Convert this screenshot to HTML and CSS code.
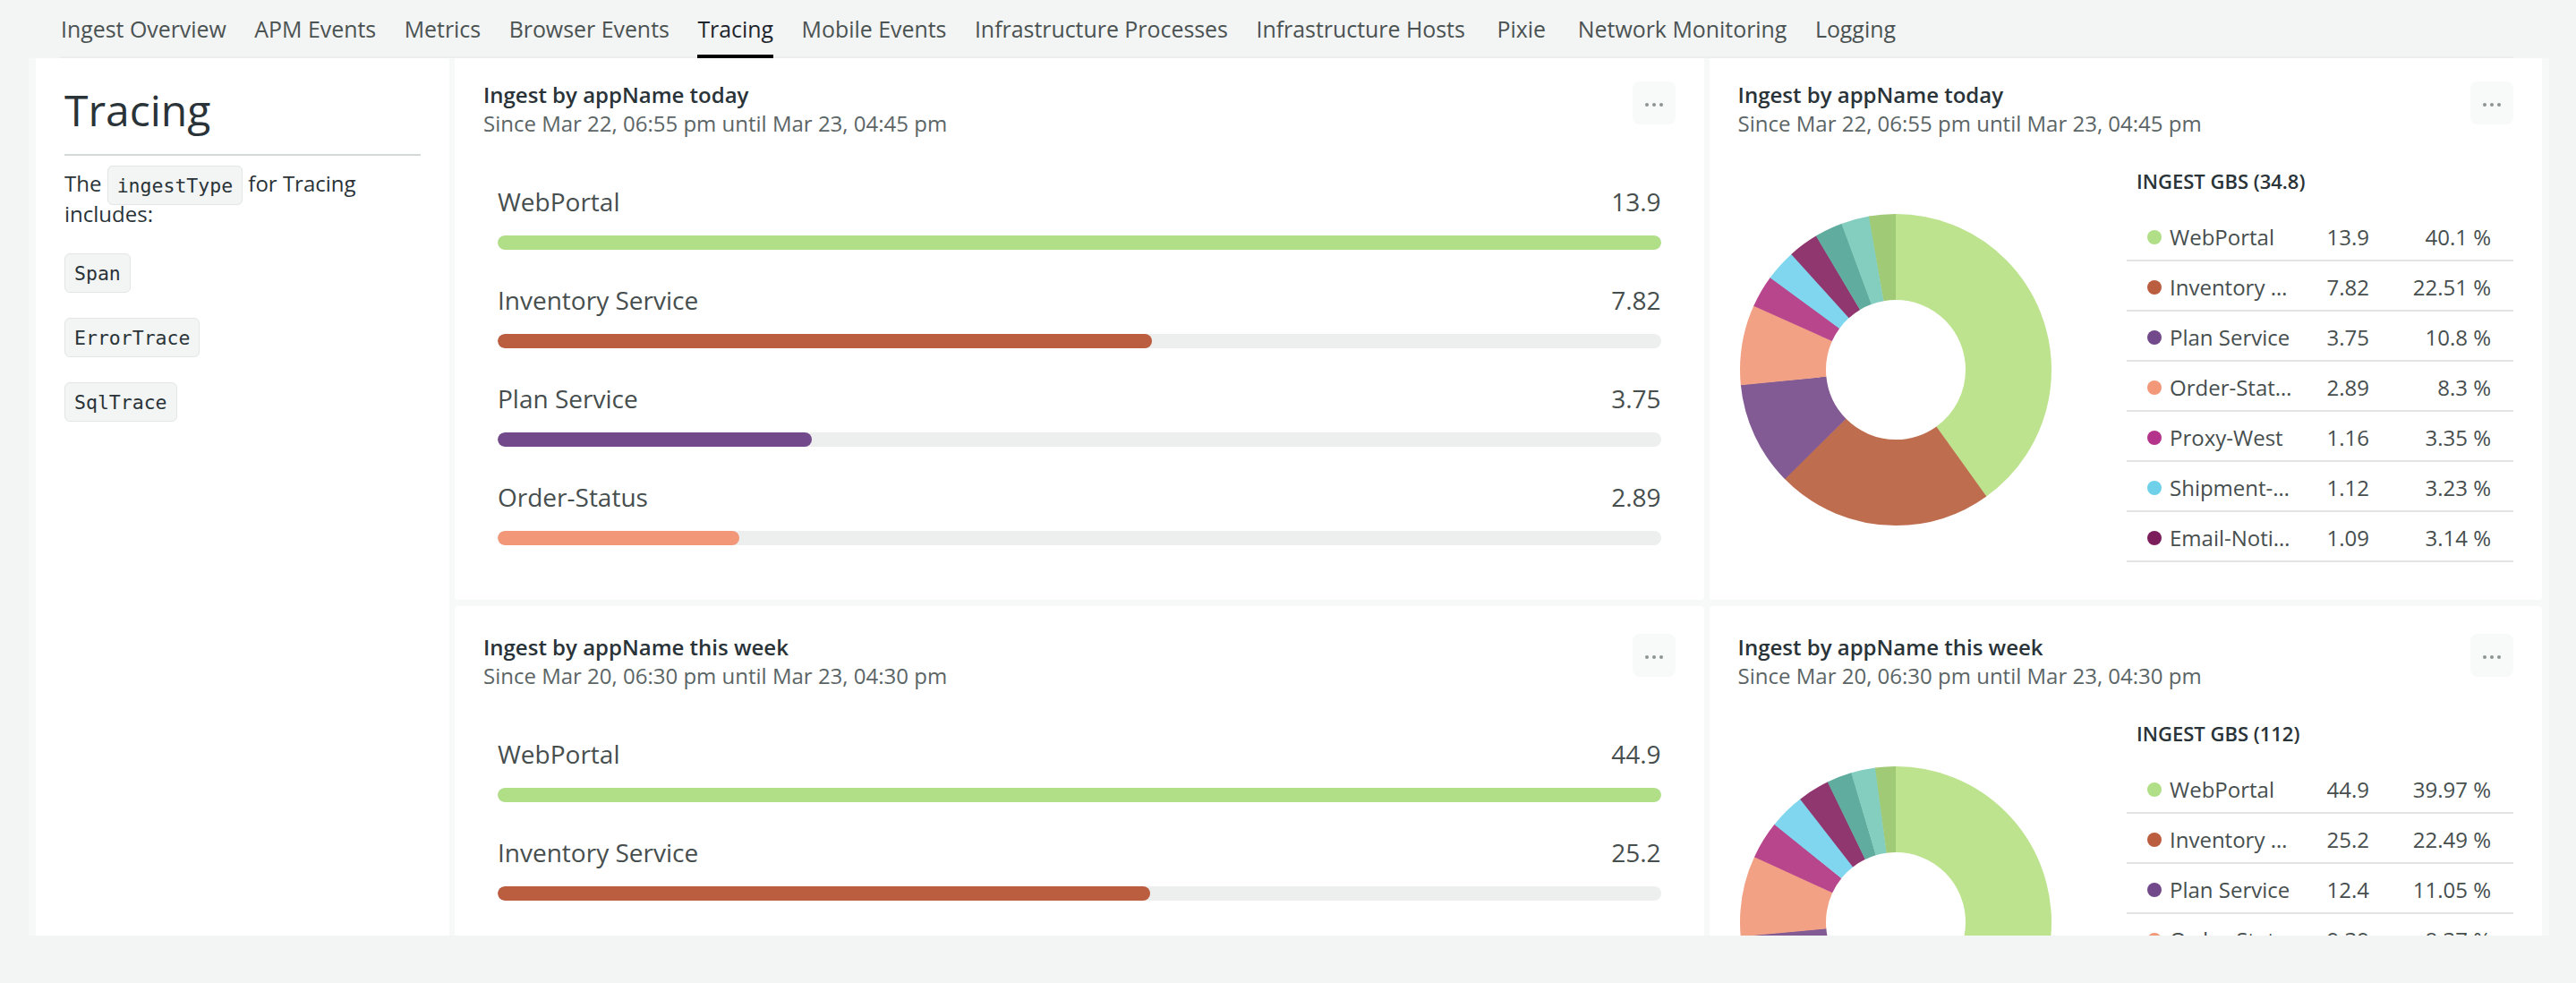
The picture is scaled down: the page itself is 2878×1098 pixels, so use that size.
FILE: index.html
```html
<!DOCTYPE html>
<html lang="en">
<head>
<meta charset="utf-8">
<title>Tracing</title>
<link rel="stylesheet" href="styles.css">
</head>
<body>
<nav class="tabs">
  <ul class="tab-list">
    <li class="tab">Ingest Overview</li>
    <li class="tab">APM Events</li>
    <li class="tab">Metrics</li>
    <li class="tab">Browser Events</li>
    <li class="tab is-active">Tracing</li>
    <li class="tab">Mobile Events</li>
    <li class="tab">Infrastructure Processes</li>
    <li class="tab">Infrastructure Hosts</li>
    <li class="tab">Pixie</li>
    <li class="tab">Network Monitoring</li>
    <li class="tab">Logging</li>
  </ul>
</nav>
<main class="dash">
  <div class="grid">
    <aside class="intro">
      <h1 class="intro-title">Tracing</h1>
      <p class="intro-text">The <code class="chip">ingestType</code> for Tracing includes:</p>
      <ul class="chip-list">
        <li><code class="chip">Span</code></li>
        <li><code class="chip">ErrorTrace</code></li>
        <li><code class="chip">SqlTrace</code></li>
      </ul>
    </aside>

    <section class="card">
      <header class="card-head">
        <div>
          <h2 class="card-title">Ingest by appName today</h2>
          <p class="card-sub">Since Mar 22, 06:55 pm until Mar 23, 04:45 pm</p>
        </div>
        <div class="more"><i></i><i></i><i></i></div>
      </header>
      <ul class="bars">
        <li class="bar-row"><div class="bar-head"><span>WebPortal</span><span>13.9</span></div><div class="bar-track"><div class="bar-fill c-web" style="width:100%"></div></div></li>
        <li class="bar-row"><div class="bar-head"><span>Inventory Service</span><span>7.82</span></div><div class="bar-track"><div class="bar-fill c-inv" style="width:56.26%"></div></div></li>
        <li class="bar-row"><div class="bar-head"><span>Plan Service</span><span>3.75</span></div><div class="bar-track"><div class="bar-fill c-plan" style="width:26.98%"></div></div></li>
        <li class="bar-row"><div class="bar-head"><span>Order-Status</span><span>2.89</span></div><div class="bar-track"><div class="bar-fill c-order" style="width:20.79%"></div></div></li>
      </ul>
    </section>

    <section class="card">
      <header class="card-head">
        <div>
          <h2 class="card-title">Ingest by appName today</h2>
          <p class="card-sub">Since Mar 22, 06:55 pm until Mar 23, 04:45 pm</p>
        </div>
        <div class="more"><i></i><i></i><i></i></div>
      </header>
      <div class="pie-body">
        <svg class="donut" viewBox="0 0 348 348">
          <g transform="rotate(-90 174 174)" fill="none" stroke-width="96">
            <circle cx="174" cy="174" r="126" pathLength="100" stroke="#bde38f" stroke-dasharray="40.15 100" stroke-dashoffset="0"/>
            <circle cx="174" cy="174" r="126" pathLength="100" stroke="#bf6d4f" stroke-dasharray="22.56 100" stroke-dashoffset="-40.1"/>
            <circle cx="174" cy="174" r="126" pathLength="100" stroke="#825b94" stroke-dasharray="10.85 100" stroke-dashoffset="-62.61"/>
            <circle cx="174" cy="174" r="126" pathLength="100" stroke="#f2a184" stroke-dasharray="8.35 100" stroke-dashoffset="-73.41"/>
            <circle cx="174" cy="174" r="126" pathLength="100" stroke="#b8468c" stroke-dasharray="3.4 100" stroke-dashoffset="-81.71"/>
            <circle cx="174" cy="174" r="126" pathLength="100" stroke="#7fd6ee" stroke-dasharray="3.28 100" stroke-dashoffset="-85.06"/>
            <circle cx="174" cy="174" r="126" pathLength="100" stroke="#913770" stroke-dasharray="3.19 100" stroke-dashoffset="-88.29"/>
            <circle cx="174" cy="174" r="126" pathLength="100" stroke="#60ac9e" stroke-dasharray="2.95 100" stroke-dashoffset="-91.43"/>
            <circle cx="174" cy="174" r="126" pathLength="100" stroke="#84cec0" stroke-dasharray="2.95 100" stroke-dashoffset="-94.33"/>
            <circle cx="174" cy="174" r="126" pathLength="100" stroke="#a0ca75" stroke-dasharray="2.77 100" stroke-dashoffset="-97.23"/>
          </g>
        </svg>
        <div class="legend">
          <h3 class="legend-title">Ingest GBs (34.8)</h3>
          <ul class="legend-list">
            <li class="legend-row"><span class="dot c-web"></span><span class="lg-name">WebPortal</span><span class="lg-val">13.9</span><span class="lg-pct">40.1 %</span></li>
            <li class="legend-row"><span class="dot c-inv"></span><span class="lg-name">Inventory Service</span><span class="lg-val">7.82</span><span class="lg-pct">22.51 %</span></li>
            <li class="legend-row"><span class="dot c-plan"></span><span class="lg-name">Plan Service</span><span class="lg-val">3.75</span><span class="lg-pct">10.8 %</span></li>
            <li class="legend-row"><span class="dot c-order"></span><span class="lg-name">Order-Status</span><span class="lg-val">2.89</span><span class="lg-pct">8.3 %</span></li>
            <li class="legend-row"><span class="dot c-proxy"></span><span class="lg-name">Proxy-West</span><span class="lg-val">1.16</span><span class="lg-pct">3.35 %</span></li>
            <li class="legend-row"><span class="dot c-ship"></span><span class="lg-name">Shipment-Tracking</span><span class="lg-val">1.12</span><span class="lg-pct">3.23 %</span></li>
            <li class="legend-row"><span class="dot c-email"></span><span class="lg-name">Email-Notifications</span><span class="lg-val">1.09</span><span class="lg-pct">3.14 %</span></li>
          </ul>
        </div>
      </div>
    </section>

    <section class="card">
      <header class="card-head">
        <div>
          <h2 class="card-title">Ingest by appName this week</h2>
          <p class="card-sub">Since Mar 20, 06:30 pm until Mar 23, 04:30 pm</p>
        </div>
        <div class="more"><i></i><i></i><i></i></div>
      </header>
      <ul class="bars">
        <li class="bar-row"><div class="bar-head"><span>WebPortal</span><span>44.9</span></div><div class="bar-track"><div class="bar-fill c-web" style="width:100%"></div></div></li>
        <li class="bar-row"><div class="bar-head"><span>Inventory Service</span><span>25.2</span></div><div class="bar-track"><div class="bar-fill c-inv" style="width:56.12%"></div></div></li>
        <li class="bar-row"><div class="bar-head"><span>Plan Service</span><span>12.4</span></div><div class="bar-track"><div class="bar-fill c-plan" style="width:27.62%"></div></div></li>
        <li class="bar-row"><div class="bar-head"><span>Order-Status</span><span>9.39</span></div><div class="bar-track"><div class="bar-fill c-order" style="width:20.91%"></div></div></li>
      </ul>
    </section>

    <section class="card">
      <header class="card-head">
        <div>
          <h2 class="card-title">Ingest by appName this week</h2>
          <p class="card-sub">Since Mar 20, 06:30 pm until Mar 23, 04:30 pm</p>
        </div>
        <div class="more"><i></i><i></i><i></i></div>
      </header>
      <div class="pie-body">
        <svg class="donut" viewBox="0 0 348 348">
          <g transform="rotate(-90 174 174)" fill="none" stroke-width="96">
            <circle cx="174" cy="174" r="126" pathLength="100" stroke="#bde38f" stroke-dasharray="40.02 100" stroke-dashoffset="0"/>
            <circle cx="174" cy="174" r="126" pathLength="100" stroke="#bf6d4f" stroke-dasharray="22.54 100" stroke-dashoffset="-39.97"/>
            <circle cx="174" cy="174" r="126" pathLength="100" stroke="#825b94" stroke-dasharray="11.1 100" stroke-dashoffset="-62.46"/>
            <circle cx="174" cy="174" r="126" pathLength="100" stroke="#f2a184" stroke-dasharray="8.42 100" stroke-dashoffset="-73.51"/>
            <circle cx="174" cy="174" r="126" pathLength="100" stroke="#b8468c" stroke-dasharray="3.95 100" stroke-dashoffset="-81.88"/>
            <circle cx="174" cy="174" r="126" pathLength="100" stroke="#7fd6ee" stroke-dasharray="3.75 100" stroke-dashoffset="-85.78"/>
            <circle cx="174" cy="174" r="126" pathLength="100" stroke="#913770" stroke-dasharray="3.35 100" stroke-dashoffset="-89.48"/>
            <circle cx="174" cy="174" r="126" pathLength="100" stroke="#60ac9e" stroke-dasharray="2.65 100" stroke-dashoffset="-92.78"/>
            <circle cx="174" cy="174" r="126" pathLength="100" stroke="#84cec0" stroke-dasharray="2.55 100" stroke-dashoffset="-95.38"/>
            <circle cx="174" cy="174" r="126" pathLength="100" stroke="#a0ca75" stroke-dasharray="2.12 100" stroke-dashoffset="-97.88"/>
          </g>
        </svg>
        <div class="legend">
          <h3 class="legend-title">Ingest GBs (112)</h3>
          <ul class="legend-list">
            <li class="legend-row"><span class="dot c-web"></span><span class="lg-name">WebPortal</span><span class="lg-val">44.9</span><span class="lg-pct">39.97 %</span></li>
            <li class="legend-row"><span class="dot c-inv"></span><span class="lg-name">Inventory Service</span><span class="lg-val">25.2</span><span class="lg-pct">22.49 %</span></li>
            <li class="legend-row"><span class="dot c-plan"></span><span class="lg-name">Plan Service</span><span class="lg-val">12.4</span><span class="lg-pct">11.05 %</span></li>
            <li class="legend-row"><span class="dot c-order"></span><span class="lg-name">Order-Status</span><span class="lg-val">9.39</span><span class="lg-pct">8.37 %</span></li>
            <li class="legend-row"><span class="dot c-proxy"></span><span class="lg-name">Proxy-West</span><span class="lg-val">4.38</span><span class="lg-pct">3.9 %</span></li>
            <li class="legend-row"><span class="dot c-ship"></span><span class="lg-name">Shipment-Tracking</span><span class="lg-val">4.16</span><span class="lg-pct">3.7 %</span></li>
            <li class="legend-row"><span class="dot c-email"></span><span class="lg-name">Email-Notifications</span><span class="lg-val">3.7</span><span class="lg-pct">3.3 %</span></li>
          </ul>
        </div>
      </div>
    </section>
  </div>
</main>
</body>
</html>
```

FILE: styles.css
```css
html, body {
  margin: 0;
  padding: 0;
}

body {
  width: 2878px;
  height: 1098px;
  overflow: hidden;
  background: #f3f4f4;
  font-family: "Open Sans", "Liberation Sans", sans-serif;
  color: #464e4e;
}

ul {
  list-style: none;
  margin: 0;
  padding: 0;
}

/* ---------- Tabs ---------- */
.tabs {
  height: 65px;
  padding: 0 70px 0 67px;
}

.tab-list {
  display: flex;
  gap: 31.5px;
  height: 65px;
  padding-left: 1px;
  box-shadow: inset 0 -2px 0 #eceeee;
}

.tab {
  box-sizing: border-box;
  min-width: 63px;
  height: 65px;
  padding-top: 16px;
  font-size: 24.9px;
  line-height: 32px;
  text-align: center;
  color: #4a5252;
  border-bottom: 4px solid transparent;
  white-space: nowrap;
}

.tab.is-active {
  color: #1d252c;
  border-bottom-color: #000;
}

/* ---------- Dashboard ---------- */
.dash {
  box-sizing: border-box;
  width: 2816px;
  height: 980px;
  margin-left: 32px;
  padding: 0 8px;
  background: #f7f8f8;
  overflow: hidden;
}

.grid {
  display: grid;
  grid-template-columns: 462px 3fr 2fr;
  grid-template-rows: 610px 610px;
  gap: 7px 6px;
  margin-top: -5px;
}

/* ---------- Intro panel ---------- */
.intro {
  grid-row: 1 / 3;
  background: #fff;
  padding: 32px;
}

.intro-title {
  margin: 0;
  padding-bottom: 18px;
  border-bottom: 2px solid #d5d8d8;
  font-size: 48px;
  font-weight: 400;
  line-height: 62px;
  color: #293338;
}

.intro-text {
  margin: 14px 0 0;
  font-size: 24px;
  line-height: 34px;
  color: #293338;
}

.chip {
  font-family: "DejaVu Sans Mono", "Liberation Mono", monospace;
  font-size: 21.5px;
  color: #293338;
  background: #f3f4f4;
  border: 1px solid #e3e6e6;
  border-radius: 6px;
  padding: 8.5px 10px;
}

.intro-text .chip {
  line-height: 18px;
}

.chip-list {
  margin-top: 27px;
  display: flex;
  flex-direction: column;
  align-items: flex-start;
  gap: 28px;
}

.chip-list .chip {
  display: block;
  line-height: 25px;
}

/* ---------- Cards ---------- */
.card {
  background: #fff;
  padding: 32px;
  border-radius: 4px;
  min-width: 0;
  overflow: hidden;
}

.card-head {
  display: flex;
  justify-content: space-between;
  align-items: flex-start;
}

.card-title {
  margin: 0;
  font-size: 24px;
  font-weight: 600;
  line-height: 28px;
  color: #293338;
}

.card-sub {
  margin: 2px 0 0;
  font-size: 24px;
  line-height: 32px;
  color: #5b6566;
}

.more {
  flex: none;
  width: 48px;
  height: 48px;
  margin-top: -1px;
  border-radius: 8px;
  background: #f8f9f9;
  display: flex;
  align-items: center;
  justify-content: center;
  gap: 4px;
  padding-top: 3px;
  box-sizing: border-box;
}

.more i {
  width: 4px;
  height: 4px;
  border-radius: 50%;
  background: #8e9595;
}

/* ---------- Bars ---------- */
.bars {
  margin-top: 52px;
  padding: 0 16px;
}

.bar-row + .bar-row {
  margin-top: 37px;
}

.bar-head {
  display: flex;
  justify-content: space-between;
  font-size: 28px;
  line-height: 38px;
  color: #464e4e;
}

.bar-track {
  margin-top: 19px;
  height: 16px;
  border-radius: 8px;
  background: #edeeee;
  overflow: hidden;
}

.bar-fill {
  height: 100%;
  border-radius: 8px;
}

.c-web { background: #b1df87; }
.c-inv { background: #bb5d3f; }
.c-plan { background: #72498a; }
.c-order { background: #f29879; }
.c-proxy { background: #b3348a; }
.c-ship { background: #6fd0ea; }
.c-email { background: #7d1e5c; }

/* ---------- Pie ---------- */
.pie-body {
  display: flex;
  justify-content: space-between;
  align-items: flex-start;
}

.donut {
  flex: none;
  width: 348px;
  height: 348px;
  margin: 85px 0 0 2px;
}

.legend {
  flex: none;
  width: 432px;
  margin-top: 33.5px;
}

.legend-title {
  margin: 0 0 20.5px;
  padding-left: 11px;
  font-size: 22px;
  font-weight: 600;
  line-height: 28px;
  text-transform: uppercase;
  color: #293338;
}

.legend-row {
  box-sizing: border-box;
  display: flex;
  align-items: center;
  height: 56px;
  padding: 3px 25px 0 23px;
  border-bottom: 2px solid #e2e4e4;
  font-size: 24px;
  line-height: 32px;
  color: #464e4e;
}

.dot {
  flex: none;
  width: 16px;
  height: 16px;
  border-radius: 50%;
  margin-right: 9px;
}

.lg-name {
  width: 139px;
  white-space: nowrap;
  overflow: hidden;
  text-overflow: ellipsis;
}

.lg-val {
  width: 84px;
  text-align: right;
}

.lg-pct {
  width: 136px;
  text-align: right;
}
```
